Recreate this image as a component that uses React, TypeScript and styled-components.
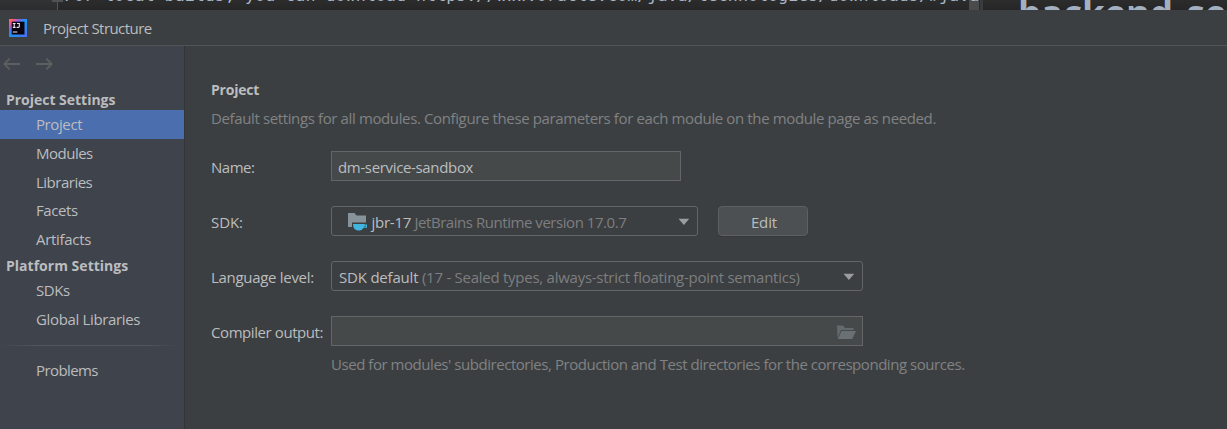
import React from "react";
import styled, { createGlobalStyle } from "styled-components";

const GlobalStyle = createGlobalStyle`
  * { box-sizing: border-box; }
  body { margin: 0; background: #3c3f41; overflow: hidden; }
`;

const Screen = styled.div`
  width: 1227px;
  height: 429px;
  display: flex;
  flex-direction: column;
  overflow: hidden;
  background: #3c3f41;
  color: #bbbdbf;
  font: 15px/20px "Open Sans", "Noto Sans", sans-serif;
  white-space: pre;
`;

const EditorStrip = styled.div`
  flex: none;
  height: 10px;
  display: flex;
  overflow: hidden;
  background: linear-gradient(#2c2c2c, #262626);
`;
const Gutter = styled.div`
  position: relative;
  width: 58px;
  flex: none;
  background: linear-gradient(#313335, #2b2c2d);
  border-right: 1px solid #555;
`;
const FoldMark = styled.div`
  position: absolute;
  top: 0;
  left: 52px;
  width: 11px;
  height: 2px;
  background: #505152;
`;
const CodeLine = styled.div`
  position: relative;
  z-index: 1;
  width: 911px;
  flex: none;
  margin-top: -14px;
  padding-left: 6px;
  height: 20px;
  color: #a9b7c6;
  font: 16.67px/20px "DejaVu Sans Mono", monospace;
  letter-spacing: 0.03px;
`;
const ScrollThumb = styled.div`
  width: 10px;
  flex: none;
  background: #4b4b4b;
`;
const Splitter = styled.div`
  width: 4px;
  flex: none;
  background: #393b3d;
  border-left: 1px solid #2b2b2b;
`;
const PreviewHeading = styled.div`
  margin: -8px 0 0 35px;
  height: 40px;
  color: #a3b0bf;
  font: bold 36.5px/40px "Open Sans", sans-serif;
  word-spacing: 4px;
`;

const TitleBar = styled.header`
  flex: none;
  height: 36px;
  display: flex;
  align-items: center;
  gap: 16px;
  padding-left: 9px;
  border-bottom: 1px solid #515456;
`;

const Body = styled.div`
  flex: 1;
  display: flex;
  min-height: 0;
`;

const Sidebar = styled.nav`
  width: 185px;
  flex: none;
  background: #3f434c;
  border-right: 1px solid #323436;
`;
const History = styled.div`
  height: 44px;
  display: flex;
  gap: 16px;
  padding: 9px 0 0 3px;
`;
const GroupTitle = styled.div<{ $h: number }>`
  height: ${(p) => p.$h}px;
  padding-left: 6px;
  font-weight: 700;
  font-size: 14px;
  line-height: ${(p) => p.$h * 2 - 20}px;
`;
const NavItem = styled.div<{ $active?: boolean }>`
  height: 28.8px;
  padding-left: 36px;
  line-height: 29px;
  background: ${(p) => (p.$active ? "#4b6eaf" : "transparent")};
`;
const Divider = styled.div`
  height: 1px;
  margin: 11px 6px 10px 0;
  background: linear-gradient(90deg, transparent, #54565b 20%, #54565b 80%, transparent);
`;

const Main = styled.main`
  flex: 1;
  padding: 34px 0 0 26px;
`;
const Heading = styled.div`
  font-weight: 700;
  height: 20px;
  font-size: 14px;
`;
const Hint = styled.div`
  color: #808284;
  height: 20px;
`;
const Intro = styled(Hint)`
  margin-top: 8px;
`;
const Row = styled.div<{ $top: number }>`
  display: flex;
  align-items: center;
  height: 30px;
  margin-top: ${(p) => p.$top}px;
`;
const Label = styled.div`
  width: 120px;
  flex: none;
  padding-top: 2px;
`;
const Field = styled.div<{ $w: number; $combo?: boolean; $pad?: number }>`
  width: ${(p) => p.$w}px;
  height: 30px;
  display: flex;
  align-items: center;
  padding: 2px ${(p) => (p.$combo ? 7 : 6)}px 0 ${(p) => p.$pad ?? 7}px;
  border: 1px solid #646566;
  border-radius: ${(p) => (p.$combo ? 3 : 0)}px;
  background: ${(p) => (p.$combo ? "#3c3f41" : "#45494a")};
  & > svg:last-child { margin-left: auto; }
`;
const Button = styled.button`
  width: 90px;
  height: 30px;
  margin-left: 20px;
  padding: 2px 0 0 2px;
  border: 1px solid #5e6060;
  border-radius: 4px;
  background: #4c5052;
  color: #bbbdbf;
  font: inherit;
  box-shadow: 0 1px 0 #36393b;
`;
const Text = styled.span<{ $ls?: number; $dim?: boolean }>`
  letter-spacing: ${(p) => p.$ls ?? -0.4}px;
  color: ${(p) => (p.$dim ? "#7d7e80" : "inherit")};
`;

const Logo = () => (
  <svg width="18" height="18" viewBox="0 0 18 18">
    <defs>
      <linearGradient id="ij" x1="0" y1="0" x2="1" y2="1">
        <stop offset="0" stopColor="#ff7a3c" />
        <stop offset=".16" stopColor="#f5558a" />
        <stop offset=".34" stopColor="#6a6cf2" />
        <stop offset=".5" stopColor="#1a98f8" />
        <stop offset="1" stopColor="#4f6cf0" />
      </linearGradient>
    </defs>
    <rect width="18" height="18" fill="url(#ij)" />
    <path d="M0 11V18H9Z" fill="#268df5" />
    <rect x="2.7" y="2.7" width="12.8" height="12.8" fill="#0b0410" />
    <path d="M3.8 4.5h2.8M5.2 4.5v4M3.8 8.4h2.8M8 4.5h2.3v3q0 .9-.9.9H7.6M3.8 13h4.5" stroke="#e8e8ee" strokeWidth="1.1" fill="none" />
  </svg>
);
const Arrow = ({ flip }: { flip?: boolean }) => (
  <svg width="17" height="18" viewBox="0 0 17 18">
    <path
      d={flip ? "M0 9H15.5M10.4 3.7L15.7 9L10.4 14.3" : "M17 9H1.5M6.6 3.7L1.3 9L6.6 14.3"}
      stroke="#5d5e5f"
      strokeWidth="1.9"
      fill="none"
    />
  </svg>
);
const Caret = () => (
  <svg width="12" height="8" viewBox="0 0 12 8">
    <path d="M.5 .8H11.2L5.9 7Z" fill="#9a9da0" />
  </svg>
);
const SdkIcon = () => (
  <svg width="20" height="20" viewBox="0 0 20 20">
    <path d="M0 1H6.5L8.5 3.4H18V10.5H4V15H0Z" fill="#87939a" />
    <path d="M5 12H16.5V12.6H19V15.8H15.6Q14 18.6 11.5 18.6H9.5Q5.2 17.6 5 12Z" fill="#40b6e0" />
    <path d="M16.5 13.7h1.3v1.1h-1.5z" fill="#3c3f41" />
  </svg>
);
const FolderIcon = () => (
  <svg width="19" height="15" viewBox="0 0 19 15">
    <path d="M0 .5H6L8 3H16.5V5H4L.5 13Z" fill="#63696d" />
    <path d="M4.6 6H19L15.2 14H.8Z" fill="#6a7175" />
  </svg>
);

export default function App() {
  return (
    <Screen>
      <GlobalStyle />
      <EditorStrip>
        <Gutter><FoldMark /></Gutter>
        <CodeLine>For local builds, you can download https://www.oracle.com/java/technologies/downloads/#java</CodeLine>
        <ScrollThumb />
        <Splitter />
        <PreviewHeading>backend se</PreviewHeading>
      </EditorStrip>
      <TitleBar>
        <Logo />
        <Text $ls={-0.55}>Project Structure</Text>
      </TitleBar>
      <Body>
        <Sidebar>
          <History>
            <Arrow />
            <Arrow flip />
          </History>
          <GroupTitle $h={20}><Text $ls={-0.02}>Project Settings</Text></GroupTitle>
          <NavItem $active><Text>Project</Text></NavItem>
          <NavItem><Text $ls={-0.5}>Modules</Text></NavItem>
          <NavItem><Text $ls={-0.5}>Libraries</Text></NavItem>
          <NavItem><Text>Facets</Text></NavItem>
          <NavItem><Text $ls={-0.3}>Artifacts</Text></NavItem>
          <GroupTitle $h={22}><Text $ls={0.02}>Platform Settings</Text></GroupTitle>
          <NavItem><Text>SDKs</Text></NavItem>
          <NavItem><Text $ls={-0.35}>Global Libraries</Text></NavItem>
          <Divider />
          <NavItem><Text $ls={-0.6}>Problems</Text></NavItem>
        </Sidebar>
        <Main>
          <Heading><Text $ls={-0.2}>Project</Text></Heading>
          <Intro><Text $ls={-0.375}>Default settings for all modules. Configure these parameters for each module on the module page as needed.</Text></Intro>
          <Row $top={23}>
            <Label><Text $ls={-0.5}>Name:</Text></Label>
            <Field $w={350} $pad={6}><Text $ls={-0.34}>dm-service-sandbox</Text></Field>
          </Row>
          <Row $top={25}>
            <Label><Text $ls={-0.1}>SDK:</Text></Label>
            <Field $w={367} $combo $pad={16}>
              <SdkIcon />
              <Text $ls={-0.28}> jbr-17</Text>
              <Text $dim $ls={-0.45}> JetBrains Runtime version 17.0.7</Text>
              <Caret />
            </Field>
            <Button><Text $ls={-0.1}>Edit</Text></Button>
          </Row>
          <Row $top={25}>
            <Label><Text $ls={-0.3}>Language level:</Text></Label>
            <Field $w={532} $combo>
              <Text $ls={-0.2}>SDK default</Text>
              <Text $dim $ls={-0.26}> (17 - Sealed types, always-strict floating-point semantics)</Text>
              <Caret />
            </Field>
          </Row>
          <Row $top={25}>
            <Label><Text $ls={-0.42}>Compiler output:</Text></Label>
            <Field $w={532}><FolderIcon /></Field>
          </Row>
          <Row $top={3}>
            <Label />
            <Hint><Text $ls={-0.455}>Used for modules' subdirectories, Production and Test directories for the corresponding sources.</Text></Hint>
          </Row>
        </Main>
      </Body>
    </Screen>
  );
}
